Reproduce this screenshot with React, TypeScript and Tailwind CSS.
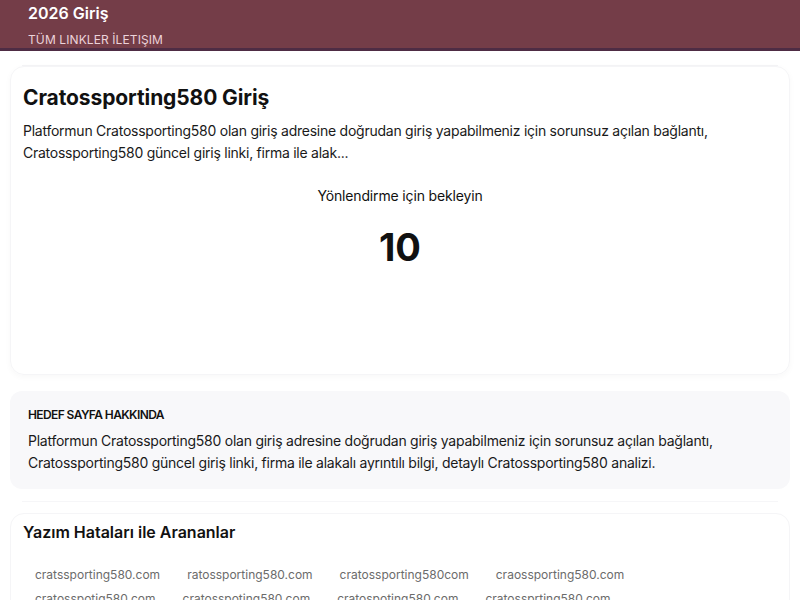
import React from "react";

const typos = [
  "cratssporting580.com",
  "ratossporting580.com",
  "cratossporting580com",
  "craossporting580.com",
  "cratosspotig580.com",
  "cratosspoting580.com",
  "cratospoting580.com",
  "cratossprting580.com",
];

export default function App() {
  return (
    <div className="min-h-[600px] bg-white text-[#111111]" style={{ fontFamily: "Inter, 'Noto Sans', sans-serif" }}>
      <header className="bg-[#743d48] border-b-[3px] border-[#4e2c44] px-7 pt-[3px] h-[51px]">
        <div className="text-white font-semibold text-[16px] leading-[20px]">2026 Giriş</div>
        <div className="text-[#ecd3da] text-[12px] leading-[16px] mt-[9px] tracking-[0.1px]">TÜM LINKLER İLETIŞIM</div>
      </header>
      <main className="px-[10px] pt-[14px] flex flex-col">
        <div className="h-px bg-[#f4f4f6] mx-3" />
        <section className="rounded-[14px] border border-[#f5f5f7] shadow-[0_2px_6px_rgba(0,0,0,0.03)] px-3 pt-[17px] pb-[20px] h-[309px]">
          <h1 className="text-[21px] leading-[28px] font-bold tracking-[-0.1px]">Cratossporting580 Giriş</h1>
          <p className="text-[14px] leading-[22px] mt-[8px] text-[#1a1a1a] tracking-[-0.25px]">
            Platformun Cratossporting580 olan giriş adresine doğrudan giriş yapabilmeniz için sorunsuz açılan bağlantı, Cratossporting580 güncel giriş linki, firma ile alak...
          </p>
          <div className="text-center text-[14px] leading-[20px] mt-[22px] tracking-[-0.15px]">Yönlendirme için bekleyin</div>
          <div className="text-center text-[38px] leading-[48px] font-bold mt-[17px]">10</div>
        </section>
        <section className="mt-[16px] rounded-[12px] bg-[#f8f8fa] px-[18px] pt-[16px] pb-[15px]">
          <div className="text-[12px] leading-[16px] font-semibold tracking-[-0.6px]">HEDEF SAYFA HAKKINDA</div>
          <p className="text-[14px] leading-[22px] mt-[7px] text-[#1a1a1a] tracking-[-0.25px]">
            Platformun Cratossporting580 olan giriş adresine doğrudan giriş yapabilmeniz için sorunsuz açılan bağlantı, Cratossporting580 güncel giriş linki, firma ile alakalı ayrıntılı bilgi, detaylı Cratossporting580 analizi.
          </p>
        </section>
        <div className="h-px bg-[#f6f6f8] mx-3 mt-[12px]" />
        <section className="rounded-[14px] border border-[#f5f5f7] px-3 pt-[6px] pb-4 mt-[11px]">
          <h2 className="text-[16px] leading-[24px] font-semibold">Yazım Hataları ile Arananlar</h2>
          <div className="flex flex-wrap gap-x-[3px] mt-[19px]">
            {typos.map((t) => (
              <span key={t} className="px-3 text-[12px] leading-[24px] text-[#6b6b6b]">{t}</span>
            ))}
          </div>
        </section>
      </main>
    </div>
  );
}
